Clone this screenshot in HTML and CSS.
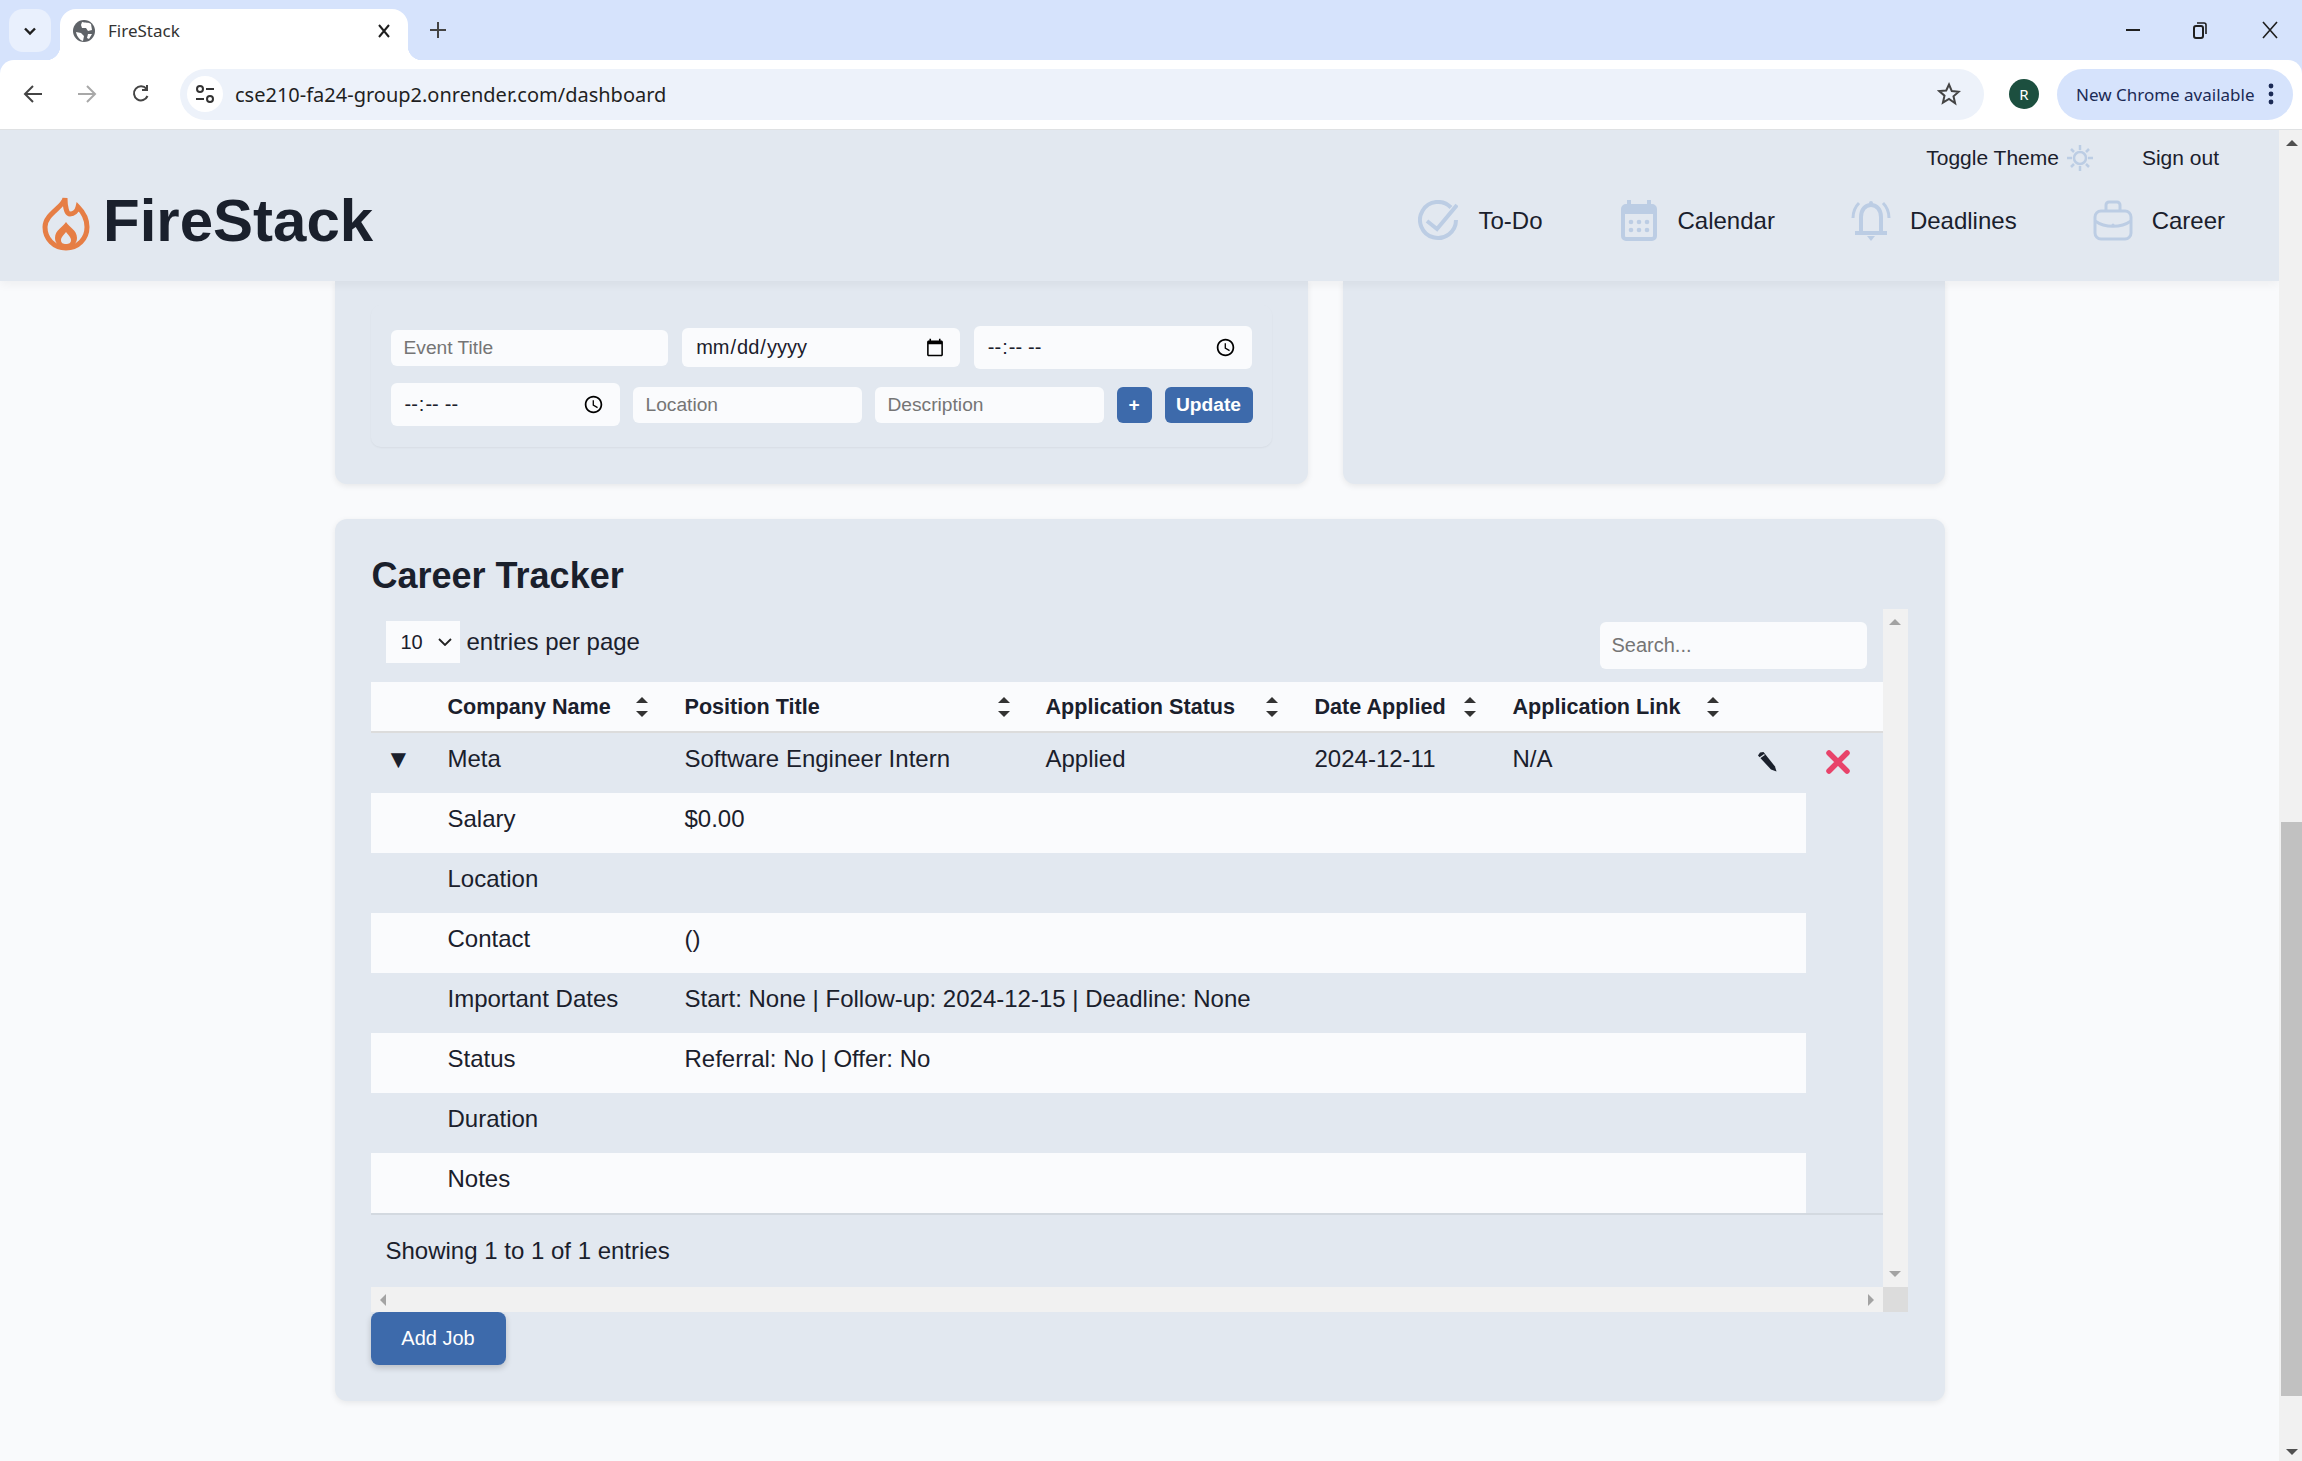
FILE: index.html
```html
<!doctype html>
<html lang="en">
<head>
<meta charset="UTF-8">
<meta name="viewport" content="width=device-width, initial-scale=1">
<title>FireStack</title>
<link rel="stylesheet" href="styles.css">
</head>

<body>
<div class="chromeFrame">
    <div class="tabStrip">
        <button class="tabSearch">
            <svg width="18" height="18" viewBox="0 0 18 18"><path d="M4 6.5l5 5 5-5" fill="none" stroke="#1f1f1f" stroke-width="2.4"/></svg>
        </button>
        <div class="tab">
            <svg class="tabFavicon" width="22" height="22" viewBox="0 0 22 22"><circle cx="11" cy="11" r="11" fill="#5f6368"/><path d="M9 2c3 1 7 0 9 2l1 6-4 1-2-3-4 0-1-3zM3 12l5 1 3 3-1 5c-3-1-6-4-7-9zM15 14l4 0-3 5-2-1z" fill="#fff"/></svg>
            <span class="tabTitle">FireStack</span>
            <svg class="tabClose" width="14" height="14" viewBox="0 0 14 14"><path d="M2 1l10 12M12 1L2 13" stroke="#1f1f1f" stroke-width="2"/></svg>
        </div>
        <svg class="tabNew" width="18" height="18" viewBox="0 0 18 18"><path d="M9 1v16M1 9h16" stroke="#444" stroke-width="2"/></svg>
        <div class="windowControls">
            <svg width="16" height="16" viewBox="0 0 16 16"><path d="M1 8h14" stroke="#1f1f1f" stroke-width="2"/></svg>
            <svg width="16" height="18" viewBox="0 0 16 18"><rect x="2" y="5" width="9" height="12" rx="2" fill="none" stroke="#1f1f1f" stroke-width="2"/><path d="M5 2h7a2 2 0 0 1 2 2v9" fill="none" stroke="#1f1f1f" stroke-width="1.6"/></svg>
            <svg width="16" height="18" viewBox="0 0 16 18"><path d="M1 1l14 16M15 1L1 17" stroke="#1f1f1f" stroke-width="1.6"/></svg>
        </div>
    </div>
    <div class="toolbar">
        <svg class="toolIcon" width="20" height="20" viewBox="0 0 20 20"><path d="M19 10H3M10 2l-8 8 8 8" fill="none" stroke="#444" stroke-width="2"/></svg>
        <svg class="toolIcon" width="20" height="20" viewBox="0 0 20 20"><path d="M1 10h16M10 2l8 8-8 8" fill="none" stroke="#a8a8a8" stroke-width="2"/></svg>
        <svg class="toolIcon" width="20" height="20" viewBox="0 0 20 20"><path d="M16.5 12a7 7 0 1 1-1-7M16 1v5h-5" fill="none" stroke="#444" stroke-width="2"/></svg>
        <div class="omnibox">
            <div class="siteInfo">
                <svg width="20" height="20" viewBox="0 0 20 20"><circle cx="5" cy="5" r="3" fill="none" stroke="#333" stroke-width="2"/><circle cx="15" cy="15" r="3" fill="none" stroke="#333" stroke-width="2"/><path d="M11 5h8M1 15h8" stroke="#333" stroke-width="2"/></svg>
            </div>
            <span class="urlText">cse210-fa24-group2.onrender.com/dashboard</span>
            <svg class="starIcon" width="24" height="24" viewBox="0 0 24 24"><path d="M12 2.5l2.8 6.6 7 .6-5.3 4.6 1.6 7L12 17l-6.100 3.700 1.600-7-5.300-4.600 7-.6z" fill="none" stroke="#444" stroke-width="2"/></svg>
        </div>
        <div class="avatar">R</div>
        <div class="updatePill">
            <span>New Chrome available</span>
            <svg width="6" height="22" viewBox="0 0 6 22"><circle cx="3" cy="3" r="2.400" fill="#1b2a55"/><circle cx="3" cy="11" r="2.400" fill="#1b2a55"/><circle cx="3" cy="19" r="2.400" fill="#1b2a55"/></svg>
        </div>
    </div>
</div>

<div class="viewport">
    <div class="page">
        <header class="siteHeader">
            <div class="logo">
                <svg width="48" height="57" viewBox="0 0 48 57">
                    <path d="M23 4C22 13 3 20 3 33C3 45 12 54 24 54C36 54 45 45 45 33C45 25 41 18 36 13C35 17 32 20 28 20C25 20 23 14 23 4Z" fill="none" stroke="#e67e45" stroke-width="5"/>
                    <path fill-rule="evenodd" d="M24 28C21 33 13 36 13 44C13 50 18 54 24 54C30 54 35 50 35 44C35 36 27 33 24 28ZM24 38C22 41 19 43 19 46C19 49 21 50 24 50C27 50 29 49 29 46C29 43 26 41 24 38Z" fill="#e67e45"/>
                </svg>
                <span class="logoText">FireStack</span>
            </div>
            <div class="headerRight">
                <div class="topLinks">
                    <span class="toggleTheme">Toggle Theme
                        <svg width="28" height="28" viewBox="0 0 28 28" fill="none" stroke="#bccde4" stroke-width="2.500"><circle cx="14" cy="14" r="6"/><path d="M14 1v5M14 22v5M1 14h5M22 14h5M5 5l3 3M20 20l3 3M23 5l-3 3M8 20l-3 3"/></svg>
                    </span>
                    <span>Sign out</span>
                </div>
                <nav class="mainNav">
                    <a class="navItem navTodo">
                        <svg width="40" height="41" viewBox="0 0 40 41" fill="none" stroke="#bccde4" stroke-width="4"><path d="M33 7.500A18 18 0 1 0 38 20"/><path d="M9 21l10 8L39 5"/></svg>
                        To-Do
                    </a>
                    <a class="navItem navCalendar">
                        <svg width="36" height="41" viewBox="0 0 36 41"><rect x="2" y="6" width="32" height="33" rx="3" fill="none" stroke="#bccde4" stroke-width="4"/><path d="M2 8h32v6H2zM6 0h4v6H6zM26 0h4v6h-4z" fill="#bccde4"/><g fill="#bccde4"><circle cx="10" cy="22" r="2.300"/><circle cx="18" cy="22" r="2.300"/><circle cx="26" cy="22" r="2.300"/><circle cx="10" cy="30" r="2.300"/><circle cx="18" cy="30" r="2.300"/><circle cx="26" cy="30" r="2.300"/></g></svg>
                        Calendar
                    </a>
                    <a class="navItem">
                        <svg width="40" height="41" viewBox="0 0 40 41" fill="none" stroke="#bccde4" stroke-width="4"><path d="M10 33V17C10 10 14 5 20 5S30 10 30 17V33"/><path d="M4 33h32" stroke-width="4"/><path d="M2 18C2 12 4 7 8 3M38 18C38 12 36 7 32 3" stroke-width="3"/><path d="M16 36h8l-4 5z" fill="#bccde4" stroke="none"/><circle cx="20" cy="3" r="2" fill="#bccde4" stroke="none"/></svg>
                        Deadlines
                    </a>
                    <a class="navItem">
                        <svg width="40" height="41" viewBox="0 0 40 41" fill="none" stroke="#bccde4" stroke-width="3"><rect x="2" y="11" width="36" height="28" rx="6"/><path d="M13 11V5a3 3 0 0 1 3-3h8a3 3 0 0 1 3 3v6"/><path d="M2 21c10 7 26 7 36 0"/><circle cx="20" cy="25" r="1.500" fill="#bccde4" stroke="none"/></svg>
                        Career
                    </a>
                </nav>
            </div>
        </header>

        <main class="content">
            <div class="topCards">
                <section class="card cardClipped">
                    <form class="eventForm">
                        <div class="formRow">
                            <input class="field fieldText" type="text" placeholder="Event Title">
                            <input class="field fieldDate" type="date">
                            <input class="field fieldTime" type="time">
                        </div>
                        <div class="formRow formRowTight">
                            <input class="field fieldTime" type="time">
                            <input class="field fieldText" type="text" placeholder="Location">
                            <input class="field fieldText" type="text" placeholder="Description">
                            <button class="button buttonPlus" type="button">+</button>
                            <button class="button buttonUpdate" type="button">Update</button>
                        </div>
                    </form>
                </section>
                <section class="card cardClipped"></section>
            </div>

            <section class="card careerCard">
                <h2 class="careerTitle">Career Tracker</h2>
                <div class="tableScroll">
                    <div class="tableArea">
                        <div class="tableTop">
                            <label class="perPage"><select class="perPageSelect"><option>10</option></select> entries per page</label>
                            <input class="searchBox" type="text" placeholder="Search...">
                        </div>
                        <table class="jobTable">
                            <colgroup>
                                <col class="col0"><col class="col1"><col class="col2"><col class="col3"><col class="col4"><col class="col5"><col class="col6"><col class="col7">
                            </colgroup>
                            <thead>
                                <tr>
                                    <th></th>
                                    <th><span class="thInner thCompany">Company Name<i class="sortIcon"></i></span></th>
                                    <th><span class="thInner thPosition">Position Title<i class="sortIcon"></i></span></th>
                                    <th><span class="thInner thStatus">Application Status<i class="sortIcon"></i></span></th>
                                    <th><span class="thInner thDate">Date Applied<i class="sortIcon"></i></span></th>
                                    <th><span class="thInner thLink">Application Link<i class="sortIcon"></i></span></th>
                                    <th></th>
                                    <th></th>
                                </tr>
                            </thead>
                            <tbody>
                                <tr class="jobRow">
                                    <td class="expandCell">▼</td>
                                    <td>Meta</td>
                                    <td>Software Engineer Intern</td>
                                    <td>Applied</td>
                                    <td>2024-12-11</td>
                                    <td>N/A</td>
                                    <td class="iconCell">
                                        <svg width="20" height="20" viewBox="0 0 20 20"><path d="M3 0.500L6.500 0L18 14.500L19.500 19.500L14 17.500L1 3.500Z" fill="#1a202c"/><path d="M2.500 6L7.500 2.500" stroke="#e2e8f0" stroke-width="1.200"/></svg>
                                    </td>
                                    <td class="iconCell iconCellDelete">
                                        <svg width="24" height="24" viewBox="0 0 24 24"><path d="M3 3l18 18M21 3L3 21" stroke="#e8436a" stroke-width="5.500" stroke-linecap="round"/></svg>
                                    </td>
                                </tr>
                                <tr class="detailRow detailLight"><td></td><td>Salary</td><td colspan="5">$0.00</td><td class="detailGap"></td></tr>
                                <tr class="detailRow"><td></td><td>Location</td><td colspan="5"></td><td class="detailGap"></td></tr>
                                <tr class="detailRow detailLight"><td></td><td>Contact</td><td colspan="5">()</td><td class="detailGap"></td></tr>
                                <tr class="detailRow"><td></td><td>Important Dates</td><td colspan="5">Start: None | Follow-up: 2024-12-15 | Deadline: None</td><td class="detailGap"></td></tr>
                                <tr class="detailRow detailLight"><td></td><td>Status</td><td colspan="5">Referral: No | Offer: No</td><td class="detailGap"></td></tr>
                                <tr class="detailRow"><td></td><td>Duration</td><td colspan="5"></td><td class="detailGap"></td></tr>
                                <tr class="detailRow detailLight"><td></td><td>Notes</td><td colspan="5"></td><td class="detailGap"></td></tr>
                            </tbody>
                        </table>
                        <div class="tableFoot">Showing 1 to 1 of 1 entries</div>
                    </div>
                    <div class="innerBarV">
                        <i class="arrowUp arrowSoft"></i>
                        <i class="arrowDown arrowSoft"></i>
                    </div>
                    <div class="innerBarH">
                        <i class="arrowLeft"></i>
                        <i class="arrowRight"></i>
                    </div>
                    <div class="innerCorner"></div>
                </div>
                <button class="button buttonAdd" type="button">Add Job</button>
            </section>
        </main>
    </div>
    <div class="pageBar">
        <i class="arrowUp"></i>
        <div class="pageBarThumb"></div>
        <i class="arrowDown"></i>
    </div>
</div>
</body>
</html>
```

FILE: styles.css
```css
*,
*:after,
*:before {
    box-sizing: border-box;
}
html,
body {
    height: 100%;
    margin: 0;
    overflow: hidden;
}
body {
    background: #f9fafc;
    color: #1a202c;
    display: flex;
    flex-direction: column;
    font-family: "Liberation Sans", Arial, sans-serif;
    height: 1461px;
}
i {
    display: block;
}

/* browser chrome */
.chromeFrame {
    background: #d6e3fc;
    flex: none;
    font-family: "Noto Sans", "Open Sans", sans-serif;
}
.tabStrip {
    align-items: flex-end;
    display: flex;
    height: 60px;
    padding-left: 9px;
    position: relative;
}
.tabSearch {
    align-items: center;
    align-self: flex-start;
    background: #e9f0fd;
    border: 0;
    border-radius: 14px;
    display: flex;
    height: 43px;
    justify-content: center;
    margin-top: 9px;
    padding: 0;
    width: 42px;
}
.tab {
    align-items: center;
    background: #fff;
    border-radius: 16px 16px 0 0;
    display: flex;
    height: 51px;
    margin-left: 9px;
    padding: 0 17px 8px 13px;
    position: relative;
    width: 348px;
}
.tab:before,
.tab:after {
    bottom: 0;
    content: "";
    height: 14px;
    position: absolute;
    width: 14px;
}
.tab:before {
    background: radial-gradient(circle at 0 0, transparent 14px, #fff 14.5px);
    left: -14px;
}
.tab:after {
    background: radial-gradient(circle at 100% 0, transparent 14px, #fff 14.5px);
    right: -14px;
}
.tabTitle {
    color: #333;
    flex: 1;
    font-size: 17px;
    margin-left: 13px;
}
.tabNew {
    align-self: center;
    margin-left: 21px;
}
.windowControls {
    align-items: center;
    align-self: center;
    display: flex;
    gap: 51px;
    margin-left: auto;
    padding-right: 24px;
}
.windowControls svg:last-child {
    margin-left: 3px;
}
.toolbar {
    align-items: center;
    background: #fff;
    border-bottom: 1px solid #dfe1e3;
    border-radius: 14px 14px 0 0;
    display: flex;
    height: 70px;
    padding: 0 9px 1px 23px;
}
.toolIcon {
    flex: none;
    margin-right: 34px;
}
.omnibox {
    align-items: center;
    background: #edf2fa;
    border-radius: 26px;
    display: flex;
    height: 51px;
    margin-left: -5px;
    padding: 0 23px 0 7px;
    width: 1804px;
}
.siteInfo {
    align-items: center;
    background: #fff;
    border-radius: 50%;
    display: flex;
    height: 36px;
    justify-content: center;
    width: 36px;
}
.urlText {
    color: #1f1f1f;
    flex: 1;
    font-size: 20px;
    margin-left: 12px;
}
.avatar {
    align-items: center;
    background: #1c4f3f;
    border-radius: 50%;
    color: #fff;
    display: flex;
    font-size: 15px;
    height: 30px;
    justify-content: center;
    margin-left: 25px;
    width: 30px;
}
.updatePill {
    align-items: center;
    background: #d6e3fc;
    border-radius: 26px;
    color: #1b2a55;
    display: flex;
    font-size: 17px;
    height: 51px;
    justify-content: space-between;
    margin-left: 18px;
    padding: 0 19px;
    width: 236px;
}

/* page area */
.viewport {
    display: flex;
    flex: 1;
    min-height: 0;
}
.page {
    flex: 1;
    min-width: 0;
    overflow: hidden;
}
.pageBar {
    align-items: center;
    background: #f1f1f1;
    display: flex;
    flex: none;
    flex-direction: column;
    padding: 10px 0 6px 2px;
    width: 23px;
}
.pageBarThumb {
    background: #c1c1c1;
    height: 574px;
    margin-bottom: auto;
    margin-top: 676px;
    width: 100%;
}
.arrowUp,
.arrowDown {
    border-left: 6px solid transparent;
    border-right: 6px solid transparent;
    height: 0;
    width: 0;
}
.arrowUp {
    border-bottom: 6px solid #505050;
}
.arrowDown {
    border-top: 6px solid #505050;
}
.arrowSoft {
    border-bottom-color: #a3a3a3;
    border-top-color: #a3a3a3;
}
.arrowLeft,
.arrowRight {
    border-bottom: 6px solid transparent;
    border-top: 6px solid transparent;
    height: 0;
    width: 0;
}
.arrowLeft {
    border-right: 6px solid #a3a3a3;
}
.arrowRight {
    border-left: 6px solid #a3a3a3;
}

/* site header */
.siteHeader {
    align-items: flex-start;
    background: #e2e8f0;
    box-shadow: 0 3px 10px rgba(0, 0, 0, 0.05);
    display: flex;
    height: 151px;
    justify-content: space-between;
    padding: 14px 54px 0 42px;
    position: relative;
    z-index: 2;
}
.logo {
    align-items: flex-start;
    display: flex;
    gap: 13px;
    margin-top: 47px;
}
.logo svg {
    margin-top: 3px;
}
.logoText {
    font-size: 60px;
    font-weight: 700;
    line-height: 1;
}
.headerRight {
    align-items: flex-end;
    display: flex;
    flex-direction: column;
    gap: 28px;
}
.topLinks {
    align-items: center;
    display: flex;
    font-size: 21px;
    gap: 48px;
    height: 28px;
    padding-right: 6px;
}
.toggleTheme {
    align-items: center;
    display: flex;
    gap: 7px;
}
.mainNav {
    display: flex;
    gap: 76px;
}
.navItem {
    align-items: center;
    display: flex;
    font-size: 24px;
    gap: 19px;
}
.navTodo {
    gap: 20px;
    margin-right: 2px;
}
.navCalendar {
    gap: 21px;
}

/* cards */
.content {
    margin: 0 auto;
    width: 1610px;
}
.topCards {
    display: grid;
    gap: 35px;
    grid-template-columns: 973px 602px;
    height: 203px;
}
.card {
    background: #e2e8f0;
    border-radius: 12px;
    box-shadow: 0 2px 6px rgba(0, 0, 0, 0.08);
}
.cardClipped {
    border-radius: 0 0 12px 12px;
    padding: 24px 36px 0;
}
.eventForm {
    border-radius: 10px;
    box-shadow: 0 1px 2px rgba(0, 0, 0, 0.05);
    display: flex;
    flex-direction: column;
    gap: 14px;
    height: 142px;
    padding: 21px 20px 0;
}
.formRow {
    align-items: center;
    display: flex;
    gap: 14px;
    width: 861px;
}
.formRowTight {
    gap: 13px;
    width: 862px;
}
.field {
    background: #fafbfd;
    border: 0;
    border-radius: 6px;
    color: #1a202c;
    flex: 1;
    font-family: "Liberation Sans", Arial, sans-serif;
    font-size: 20px;
    min-width: 0;
    padding: 0 13px;
}
.fieldText {
    font-size: 19.2px;
    height: 36px;
}
.fieldDate {
    height: 39px;
}
.fieldTime {
    height: 43px;
}
.button {
    background: #3d6aab;
    border: 0;
    border-radius: 6px;
    color: #fff;
    font-family: "Liberation Sans", Arial, sans-serif;
    padding: 0;
}
.buttonPlus {
    flex: none;
    font-size: 19.2px;
    font-weight: 700;
    height: 36px;
    width: 35px;
}
.buttonUpdate {
    flex: none;
    font-size: 19.2px;
    font-weight: 700;
    height: 36px;
    width: 88px;
}

/* career tracker */
.careerCard {
    margin-top: 35px;
    padding: 37px 36px 36px;
}
.careerTitle {
    font-size: 36px;
    font-weight: 700;
    line-height: 40px;
    margin: 0 0 13px 1px;
}
.tableScroll {
    display: grid;
    grid-template-columns: 1512px 25px;
    grid-template-rows: 678px 25px;
    height: 703px;
}
.tableArea {
    display: flex;
    flex-direction: column;
}
.tableTop {
    align-items: flex-start;
    display: flex;
    height: 73px;
    justify-content: space-between;
    padding: 12px 16px 0 15px;
}
.perPage {
    align-items: center;
    display: flex;
    font-size: 24px;
    gap: 7px;
}
.perPageSelect {
    appearance: none;
    background: #fafbfd url("data:image/svg+xml,%3Csvg xmlns='http://www.w3.org/2000/svg' width='14' height='8'%3E%3Cpath d='M1 1l6 6 6-6' fill='none' stroke='%23222' stroke-width='1.800'/%3E%3C/svg%3E") no-repeat right 8px center;
    border: 0;
    border-radius: 0;
    color: #1a202c;
    font-family: "Liberation Sans", Arial, sans-serif;
    font-size: 20px;
    height: 42px;
    padding: 0 8px 0 15px;
    width: 74px;
}
.searchBox {
    background: #fafbfd;
    border: 0;
    border-radius: 6px;
    font-family: "Liberation Sans", Arial, sans-serif;
    font-size: 20px;
    height: 47px;
    margin-top: 1px;
    padding: 0 12px;
    width: 267px;
}
.jobTable {
    border-bottom: 2px solid #d3d9e0;
    border-collapse: collapse;
    font-size: 24px;
    table-layout: fixed;
    width: 1512px;
}
.col0 {
    width: 62px;
}
.col1 {
    width: 237px;
}
.col2 {
    width: 361px;
}
.col3 {
    width: 269px;
}
.col4 {
    width: 198px;
}
.col5 {
    width: 237px;
}
.col6 {
    width: 71px;
}
.col7 {
    width: 77px;
}
.jobTable th {
    background: #fafbfd;
    border-bottom: 2px solid #dcdcdc;
    font-size: 21.6px;
    height: 50px;
    padding: 0 0 0 15px;
    text-align: left;
}
.thInner {
    align-items: center;
    display: flex;
    justify-content: space-between;
}
.thCompany {
    width: 200px;
}
.thPosition {
    width: 325px;
}
.thStatus {
    width: 232px;
}
.thDate {
    width: 161px;
}
.thLink {
    width: 206px;
}
.sortIcon {
    border-left: 6px solid transparent;
    border-right: 6px solid transparent;
    border-bottom: 6px solid #333;
    height: 6px;
    margin-bottom: 14px;
    position: relative;
    width: 12px;
}
.sortIcon:after {
    border-left: 6px solid transparent;
    border-right: 6px solid transparent;
    border-top: 6px solid #333;
    content: "";
    left: -6px;
    position: absolute;
    top: 14px;
}
.jobTable td {
    height: 60px;
    line-height: 36px;
    padding: 8px 15px 16px;
    vertical-align: top;
}
.jobTable .expandCell {
    font-size: 26px;
    padding-left: 15px;
}
.jobTable .iconCell {
    padding: 19px 0 0 22px;
}
.jobTable .iconCellDelete {
    padding: 17px 0 0 20px;
}
.jobTable .iconCell svg {
    display: block;
}
.detailLight td {
    background: #fafbfd;
}
.jobTable .detailRow .detailGap {
    background: transparent;
}
.tableFoot {
    font-size: 24px;
    line-height: 36px;
    padding: 18px 15px 0;
}
.innerBarV {
    align-items: center;
    background: #f1f1f1;
    display: flex;
    flex-direction: column;
    justify-content: space-between;
    padding: 10px 0;
}
.innerBarH {
    align-items: center;
    background: #f1f1f1;
    display: flex;
    justify-content: space-between;
    padding: 0 9px;
}
.innerCorner {
    background: #dcdcdc;
}
.buttonAdd {
    border-radius: 8px;
    box-shadow: 0 3px 6px rgba(0, 0, 0, 0.18);
    display: block;
    font-size: 20px;
    height: 53px;
    width: 135px;
}
```
